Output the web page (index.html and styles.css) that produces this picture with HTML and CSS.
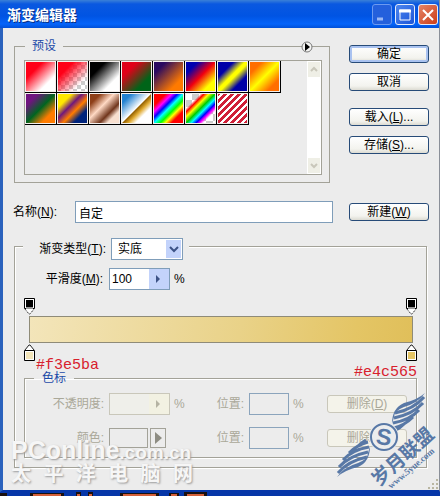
FILE: index.html
```html
<!DOCTYPE html>
<html lang="zh-CN">
<head>
    <meta charset="UTF-8">
    <title>渐变编辑器</title>
    <link rel="stylesheet" href="styles.css">
</head>
<body>
    <div class="window">
        <header class="titlebar">
            <h1>渐变编辑器</h1>
            <button class="win-btn dim" aria-label="最小化"><svg width="20" height="20"><path d="M5 14h6" stroke="#9ab8f5" stroke-width="3"/></svg></button>
            <button class="win-btn" aria-label="最大化"><svg width="20" height="20"><path d="M5 5h10v10H5z" fill="none" stroke="#fff"/><path d="M4 6h12" stroke="#fff" stroke-width="3"/></svg></button>
            <button class="win-btn close" aria-label="关闭"><svg width="20" height="20"><path d="M5 5l10 10M15 5L5 15" stroke="#fff" stroke-width="2"/></svg></button>
        </header>

        <main class="content">
            <div class="top">
                <fieldset class="group presets">
                    <legend>预设</legend>
                    <button class="menu-btn" aria-label="菜单"><svg width="12" height="12"><circle cx="6" cy="6" r="5" fill="#f4f4f2" stroke="#777"/><path d="M4 2l5 4-5 4z" fill="#000"/></svg></button>
                    <div class="list">
                        <div class="swatches">
                            <button class="swatch s1" aria-label="渐变 1"></button>
                            <button class="swatch s2" aria-label="渐变 2"></button>
                            <button class="swatch s3" aria-label="渐变 3"></button>
                            <button class="swatch s4" aria-label="渐变 4"></button>
                            <button class="swatch s5" aria-label="渐变 5"></button>
                            <button class="swatch s6" aria-label="渐变 6"></button>
                            <button class="swatch s7" aria-label="渐变 7"></button>
                            <button class="swatch s8" aria-label="渐变 8"></button>
                            <button class="swatch s9" aria-label="渐变 9"></button>
                            <button class="swatch s10" aria-label="渐变 10"></button>
                            <button class="swatch s11" aria-label="渐变 11"></button>
                            <button class="swatch s12" aria-label="渐变 12"></button>
                            <button class="swatch s13" aria-label="渐变 13"></button>
                            <button class="swatch s14" aria-label="渐变 14"></button>
                            <button class="swatch s15" aria-label="渐变 15"></button>
                        </div>
                        <div class="scrollbar">
                            <button aria-label="向上"><svg width="12" height="15"><path d="M3 9l3-3 3 3" fill="none" stroke="#c9c7ba" stroke-width="2"/></svg></button>
                            <button aria-label="向下"><svg width="12" height="15"><path d="M3 6l3 3 3-3" fill="none" stroke="#c9c7ba" stroke-width="2"/></svg></button>
                        </div>
                    </div>
                </fieldset>
                <div class="actions">
                    <button class="btn default">确定</button>
                    <button class="btn">取消</button>
                    <button class="btn spaced">载入(<u>L</u>)...</button>
                    <button class="btn">存储(<u>S</u>)...</button>
                </div>
            </div>

            <div class="name-row">
                <label for="name">名称(<u>N</u>):</label>
                <input type="text" id="name" value="自定">
                <button class="btn">新建(<u>W</u>)</button>
            </div>

            <section class="group editor">
                <div class="type-row">
                    <label for="type">渐变类型(<u>T</u>):</label>
                    <span class="select">
                        <select id="type"><option>实底</option></select>
                        <svg width="15" height="18"><path d="M4 7l4 4 4-4" fill="none" stroke="#3c5286" stroke-width="2"/></svg>
                    </span>
                </div>
                <div class="smooth-row">
                    <label for="smooth">平滑度(<u>M</u>):</label>
                    <span class="combo">
                        <input type="text" id="smooth" value="100">
                        <button aria-label="调整平滑度"><svg width="20" height="20"><path d="M7 6l4 4-4 4z" fill="#3c5286"/></svg></button>
                    </span>
                    <span>%</span>
                </div>

                <div class="ramp">
                    <div class="stops">
                        <svg width="11" height="17"><path d="M1 11l4 5h1l4-5" fill="#fff" stroke="#000" stroke-dasharray="1 1"/><path d="M.5.5h10v10H.5z" fill="#fff" stroke="#000"/><path d="M2 2h7v7H2z" fill="#000"/><path d="M2 9h7v2H2z" fill="#999"/></svg>
                        <svg width="11" height="17"><path d="M1 11l4 5h1l4-5" fill="#fff" stroke="#000" stroke-dasharray="1 1"/><path d="M.5.5h10v10H.5z" fill="#fff" stroke="#000"/><path d="M2 2h7v7H2z" fill="#000"/><path d="M2 9h7v2H2z" fill="#999"/></svg>
                    </div>
                    <div class="bar"></div>
                    <div class="stops">
                        <svg width="11" height="17"><path d="M1 6l4-5h1l4 5" fill="#fff" stroke="#222"/><path d="M.5 6.5h10v10H.5z" fill="#fff" stroke="#000"/><path d="M2 8h7v7H2z" fill="#f3e5ba"/></svg>
                        <svg width="11" height="17"><path d="M1 6l4-5h1l4 5" fill="#fff" stroke="#222"/><path d="M.5 6.5h10v10H.5z" fill="#fff" stroke="#000"/><path d="M2 8h7v7H2z" fill="#e4c565"/></svg>
                    </div>
                    <span class="hex start">#f3e5ba</span>
                    <span class="hex end">#e4c565</span>
                </div>

                <fieldset class="group stops-group" disabled>
                    <legend>色标</legend>
                    <div class="stop-row">
                        <label for="opacity">不透明度:</label>
                        <span class="combo">
                            <input type="text" id="opacity">
                            <button aria-label="调整不透明度"><svg width="20" height="20"><path d="M7 6l4 4-4 4z" fill="#b5b3a3"/></svg></button>
                        </span>
                        <span class="unit">%</span>
                        <label for="pos1">位置:</label>
                        <input type="text" id="pos1" class="pos">
                        <span class="unit">%</span>
                        <button class="btn">删除(<u>D</u>)</button>
                    </div>
                    <div class="stop-row">
                        <label for="color">颜色:</label>
                        <span class="color-pick">
                            <button id="color" class="well"></button>
                            <button class="arrow" aria-label="颜色菜单"><svg width="14" height="18"><path d="M4 3l7 6-7 6z" fill="#8d8c82"/></svg></button>
                        </span>
                        <span class="unit"></span>
                        <label for="pos2">位置:</label>
                        <input type="text" id="pos2" class="pos">
                        <span class="unit">%</span>
                        <button class="btn">删除(<u>D</u>)</button>
                    </div>
                </fieldset>
            </section>
        </main>

        <div class="site-mark">
            <div class="site-name">PConline<small>.com.cn</small></div>
            <div class="site-cn"><span>太</span><span>平</span><span>洋</span><span>电</span><span>脑</span><span>网</span></div>
        </div>

        <svg class="wings" width="110" height="110" viewBox="0 0 110 110">
            <defs>
                <g id="wing">
                    <path d="M95 8Q87 15 74 18Q62 23 62 39L64 32Q64 26 74 22Q88 18 95 8z" fill="#5878a6"/>
                    <path d="M94 12Q84 24 65 28M93 18Q83 29 64 33M89 25Q80 35 63 38M83 32Q75 40 64 43M74 39Q70 43 66 45" fill="none" stroke="#5878a6" stroke-width="3"/>
                </g>
            </defs>
            <use href="#wing"/>
            <use href="#wing" transform="rotate(180 51 50)"/>
            <circle cx="54" cy="52" r="15" fill="#ecedee"/>
            <circle cx="54" cy="52" r="13" fill="none" stroke="#5878a6" stroke-width="2"/>
            <text class="wing-s" x="54" y="60" transform="rotate(8 54 52)">S</text>
            <text class="wing-cn" transform="translate(49 102) rotate(-42)">岁月联盟</text>
            <text class="wing-url" transform="translate(61 104) rotate(-40)">www.5yue.com</text>
        </svg>

        <svg class="grip" width="12" height="12"><path d="M9 1h2v2H9zM5 5h2v2H5zM9 5h2v2H9zM1 9h2v2H1zM5 9h2v2H5zM9 9h2v2H9z" fill="#b9b6a2"/></svg>
    </div>
    <footer class="strip">
        <svg width="220" height="4"><path d="M0 1h7v3H0zM30 1h34v3H30zM76 0h5v4h-5zM88 0h5v4h-5zM120 1h39v3h-39zM169 1h10v3h-10zM184 0h23v4h-23z" fill="#1a1010"/><path d="M33 2h28v2H33zM77 2h3v2h-3zM89 2h3v2h-3zM123 2h33v2h-33zM171 2h6v2h-6zM187 2h17v2h-17z" fill="#d4603a"/></svg>
    </footer>
</body>
</html>
```

FILE: styles.css
```css
* {
    box-sizing: border-box;
}
body {
    margin: 0;
    background: #ececec;
    font-family: "Liberation Sans", "Noto Sans CJK SC", sans-serif;
    font-size: 12px;
    line-height: 16px;
    color: #000;
}
button, input, select {
    font: inherit;
    color: inherit;
    margin: 0;
    padding: 0;
    border: 0;
    border-radius: 0;
    background: none;
}
svg {
    display: block;
}
.window {
    position: relative;
    border-left: 3px solid #2b62bd;
    border-right: 1px solid #8a8f98;
    border-bottom: 2px solid #0636a8;
}

/* title bar */
.titlebar {
    display: flex;
    align-items: center;
    gap: 3px;
    height: 28px;
    margin-left: -3px;
    padding: 1px 1px 0 7px;
    background: linear-gradient(#3a80d8, #0a58e0 4px, #0054e3 16px, #0464fa 24px, #0050d8);
}
.titlebar h1 {
    flex: 1;
    margin: 0;
    font-size: 14px;
    line-height: 20px;
    color: #fff;
    text-shadow: 1px 1px #0a2e80;
}
.win-btn {
    width: 20px;
    height: 21px;
    border: 1px solid #e4ecfb;
    border-radius: 3px;
    background: linear-gradient(135deg, #4d86ee, #1c55d8);
}
.win-btn svg {
    margin: -1px;
}
.win-btn.dim {
    border-color: #6c9af0;
    background: #2460dc;
}
.win-btn.close {
    background: linear-gradient(135deg, #e58467, #cc3d18);
}

/* groups */
.content {
    padding: 10px 10px 22px 11px;
}
.group {
    min-width: 0;
    margin: 0;
    border: 1px solid #a3a298;
    box-shadow: 1px 1px #fff, inset 1px 1px #fff;
}
.group legend {
    padding: 0 7px;
    color: #1c4aa8;
}
.top {
    display: flex;
    gap: 19px;
}
.presets {
    position: relative;
    flex: 1;
    padding: 6px 7px 7px 9px;
    box-shadow: none;
}
.presets legend {
    margin-left: 1px;
}
.menu-btn {
    position: absolute;
    top: -13px;
    right: 16px;
}
.list {
    display: flex;
    height: 115px;
    border: 1px solid #a3a298;
}
.swatches {
    flex: 1;
    display: flex;
    flex-wrap: wrap;
    align-content: flex-start;
}
.swatch {
    width: 32px;
    height: 32px;
    border: solid #000;
    border-width: 0 1px 1px 0;
    box-shadow: inset 0 0 0 1px #f4f0ee;
}
.s1 { background: linear-gradient(135deg, #ff0018 30%, #fff 72%); }
.s2 { background: linear-gradient(135deg, #ff0018 28%, rgba(255, 0, 24, 0) 75%), repeating-conic-gradient(#ccc 0 25%, #fff 0 50%) 0 0 / 8px 8px; }
.s3 { background: linear-gradient(135deg, #000 28%, #fff 72%); }
.s4 { background: linear-gradient(135deg, #e00018 28%, #006418 72%); }
.s5 { background: linear-gradient(135deg, #2a0a60 22%, #ff7a00 75%); }
.s6 { background: linear-gradient(135deg, #0000b0 22%, #f00010 50%, #ffff00 78%); }
.s7 { background: linear-gradient(135deg, #0000a8 28%, #ffff00 47%, #ffff00 53%, #0000a8 72%); }
.s8 { background: linear-gradient(135deg, #ff6e00 22%, #ffff00 50%, #ff6e00 78%); }
.s9 { background: linear-gradient(135deg, #701480 22%, #006420 50%, #ff7c00 75%); }
.s10 { background: linear-gradient(135deg, #ffe800 25%, #70187c 42%, #ff7c00 58%, #00247c 75%); }
.s11 { background: linear-gradient(135deg, #8e3f18 20%, #ffd9c4 42%, #70351c 65%, #f8e0d0 78%); }
.s12 { background: linear-gradient(135deg, #2180d0 18%, #fff 49%, #936000 51%, #e0aa30 60%, #fff 72%); }
.s13 { background: linear-gradient(135deg, #f00 22%, #f0f 32%, #00f 41%, #0ff 50%, #0f0 60%, #ff0 68%, #f00 78%); }
.s14 { background: linear-gradient(135deg, transparent 26%, #f00 32%, #ff0 40%, #0c0 50%, #0ff 58%, #00f 66%, #f0f 72%, transparent 78%), repeating-conic-gradient(#ccc 0 25%, #fff 0 50%) 0 0 / 14px 14px; }
.s15 { background: repeating-linear-gradient(135deg, #d02038 0 3px, #fff 3px 5px); }
.scrollbar {
    display: flex;
    flex-direction: column;
    justify-content: space-between;
    width: 14px;
    padding: 1px;
    background: #fff;
}
.scrollbar button {
    height: 15px;
    background: #efefe6;
}

/* buttons */
.actions {
    display: flex;
    flex-direction: column;
    gap: 10px;
    width: 80px;
    padding-top: 7px;
}
.btn {
    width: 80px;
    height: 18px;
    border: 1px solid #274b78;
    border-radius: 3px;
    background: linear-gradient(#fff, #f3f3ee 75%, #dcdbd2);
    line-height: 16px;
    white-space: nowrap;
}
.btn.default {
    box-shadow: inset 0 0 0 2px #a9c2f0;
}
.btn.spaced {
    margin-top: 7px;
}

.name-row {
    display: flex;
    align-items: center;
    margin-top: 18px;
}
.name-row label {
    width: 62px;
    margin-left: -1px;
}
.name-row input {
    flex: 1;
    min-width: 0;
    height: 22px;
    margin-right: 16px;
    padding: 0 3px;
    border: 1px solid #7f9db9;
    background: #fff;
}

/* gradient editor */
.editor {
    margin: 23px 2px 0 0;
    padding: 0 9px 9px;
}
.type-row, .smooth-row {
    display: flex;
    align-items: center;
}
.type-row {
    width: 166px;
    height: 22px;
    margin: -9px 0 0 -1px;
    background: #ececec;
}
.type-row label {
    width: 88px;
    padding-right: 5px;
    text-align: right;
    white-space: nowrap;
}
.select {
    position: relative;
    width: 72px;
}
.select select {
    width: 100%;
    height: 22px;
    padding-left: 6px;
    border: 1px solid #7f9db9;
    background: #fff;
    appearance: none;
}
.select svg {
    position: absolute;
    top: 2px;
    right: 2px;
    background: #c3d3fb;
    pointer-events: none;
}
.smooth-row {
    margin-top: 8px;
    gap: 4px;
}
.smooth-row label {
    width: 81px;
    padding-right: 2px;
    text-align: right;
}
.combo {
    display: flex;
    width: 61px;
    height: 22px;
    border: 1px solid #7f9db9;
    background: #fff;
}
.combo input {
    flex: 1;
    min-width: 0;
    padding-left: 2px;
}
.combo button {
    width: 20px;
    background: #c3d3fb;
}
.ramp {
    position: relative;
    margin-top: 8px;
}
.stops {
    display: flex;
    justify-content: space-between;
    height: 18px;
}
.bar {
    height: 27px;
    margin: 0 4px 1px 5px;
    border: 1px solid #8f8b78;
    background: linear-gradient(100deg, #f3e5ba, #e9d288 55%, #e4c565 85%, #e0bf5a);
}
.hex {
    position: absolute;
    font-family: "Liberation Mono", monospace;
    font-size: 15px;
    color: #d8202c;
}
.hex.start {
    left: 12px;
    bottom: -12px;
}
.hex.end {
    right: 0;
    bottom: -19px;
}

.stops-group {
    margin-top: 8px;
    padding: 7px 9px 8px;
    color: #aaa899;
}
.stops-group legend {
    margin-left: 0;
    padding: 0 8px;
}
.stop-row {
    display: flex;
    align-items: center;
}
.stop-row + .stop-row {
    margin-top: 12px;
}
.stop-row label {
    width: 70px;
    text-align: right;
}
.stop-row .combo, .color-pick {
    margin-left: 5px;
}
.stop-row .combo {
    border-color: #c9c7ba;
    background: #efefea;
}
.stop-row .combo button {
    background: #f2f1e2;
}
.unit {
    width: 20px;
    padding-left: 4px;
}
.stop-row .unit + label {
    width: 54px;
}
.pos {
    width: 40px;
    height: 22px;
    margin-left: 5px;
    border: 1px solid #8ba4bc;
}
.stop-row .btn {
    margin-left: auto;
    border-color: #c9c7ba;
    background: #f4f3ea;
}
.color-pick {
    display: flex;
    gap: 2px;
    width: 61px;
}
.well, .arrow {
    height: 20px;
    border: 1px solid #a3a298;
}
.well {
    width: 39px;
}
.arrow {
    width: 16px;
}

/* overlays */
.site-mark {
    position: absolute;
    left: 8px;
    bottom: 6px;
    width: 182px;
    color: #f6f6f6;
    font-weight: bold;
    text-shadow: 1px 1px 2px #999;
    white-space: nowrap;
}
.site-name {
    font-size: 25px;
    line-height: 22px;
}
.site-name small {
    font-size: 19px;
}
.site-cn {
    display: flex;
    justify-content: space-between;
    font-size: 20px;
    line-height: 20px;
}
.wings {
    position: absolute;
    right: -1px;
    bottom: -5px;
}
.wings text {
    fill: #5878a6;
    font-weight: bold;
}
.wing-s {
    font-size: 23px;
    text-anchor: middle;
}
.wing-cn {
    font-size: 19px;
}
.wing-url {
    font-family: "Liberation Serif", serif;
    font-size: 9px;
}
.grip {
    position: absolute;
    right: 0;
    bottom: 0;
}
.strip {
    height: 4px;
    background: #0636a8;
}
```
